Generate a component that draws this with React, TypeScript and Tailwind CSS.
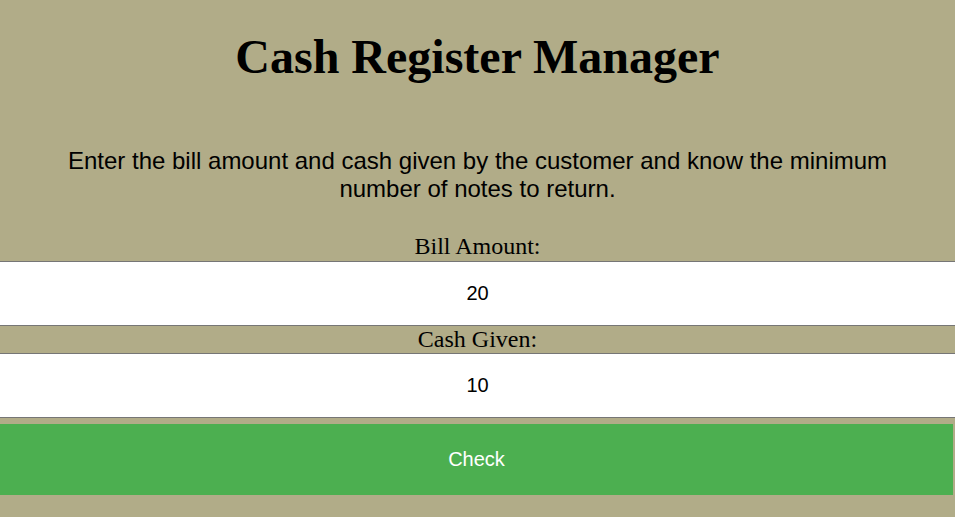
import { useState } from 'react'

// Cash register screen
const App = () => {
    const [bill, setBill] = useState("20")
    const [cash, setCash] = useState("10")

    return (
        <div className="min-h-[517px] bg-[#b1ac88] pt-[29px] text-black text-center font-['Liberation_Serif',serif]">

            <h1 className="text-[48px] leading-[55px] font-bold">
                Cash Register Manager
            </h1>

            <p className="mt-[63px] px-[40px] text-[24px] leading-[27.6px] font-['Liberation_Sans',Arial,sans-serif]">
                Enter the bill amount and cash given by the customer and know the minimum number of notes to return.
            </p>

            <label htmlFor="bill" className="block mt-[31px] text-[24px] leading-[27.5px]">
                Bill Amount:
            </label>
            <input
                id="bill"
                value={bill}
                onChange={(e) => setBill(e.target.value)}
                className="block w-full h-[65px] bg-white border-y border-[#767676] text-center text-[20px] outline-none font-['Liberation_Sans',Arial,sans-serif]"
            />

            <label htmlFor="cash" className="block text-[24px] leading-[27px]">
                Cash Given:
            </label>
            <input
                id="cash"
                value={cash}
                onChange={(e) => setCash(e.target.value)}
                className="block w-full h-[65px] bg-white border-y border-[#767676] text-center text-[20px] outline-none font-['Liberation_Sans',Arial,sans-serif]"
            />

            <button className="block mt-[6px] w-[953px] h-[71px] bg-[#4caf50] text-white text-[20px] font-['Liberation_Sans',Arial,sans-serif]">
                Check
            </button>

        </div>
    )
}

export default App
